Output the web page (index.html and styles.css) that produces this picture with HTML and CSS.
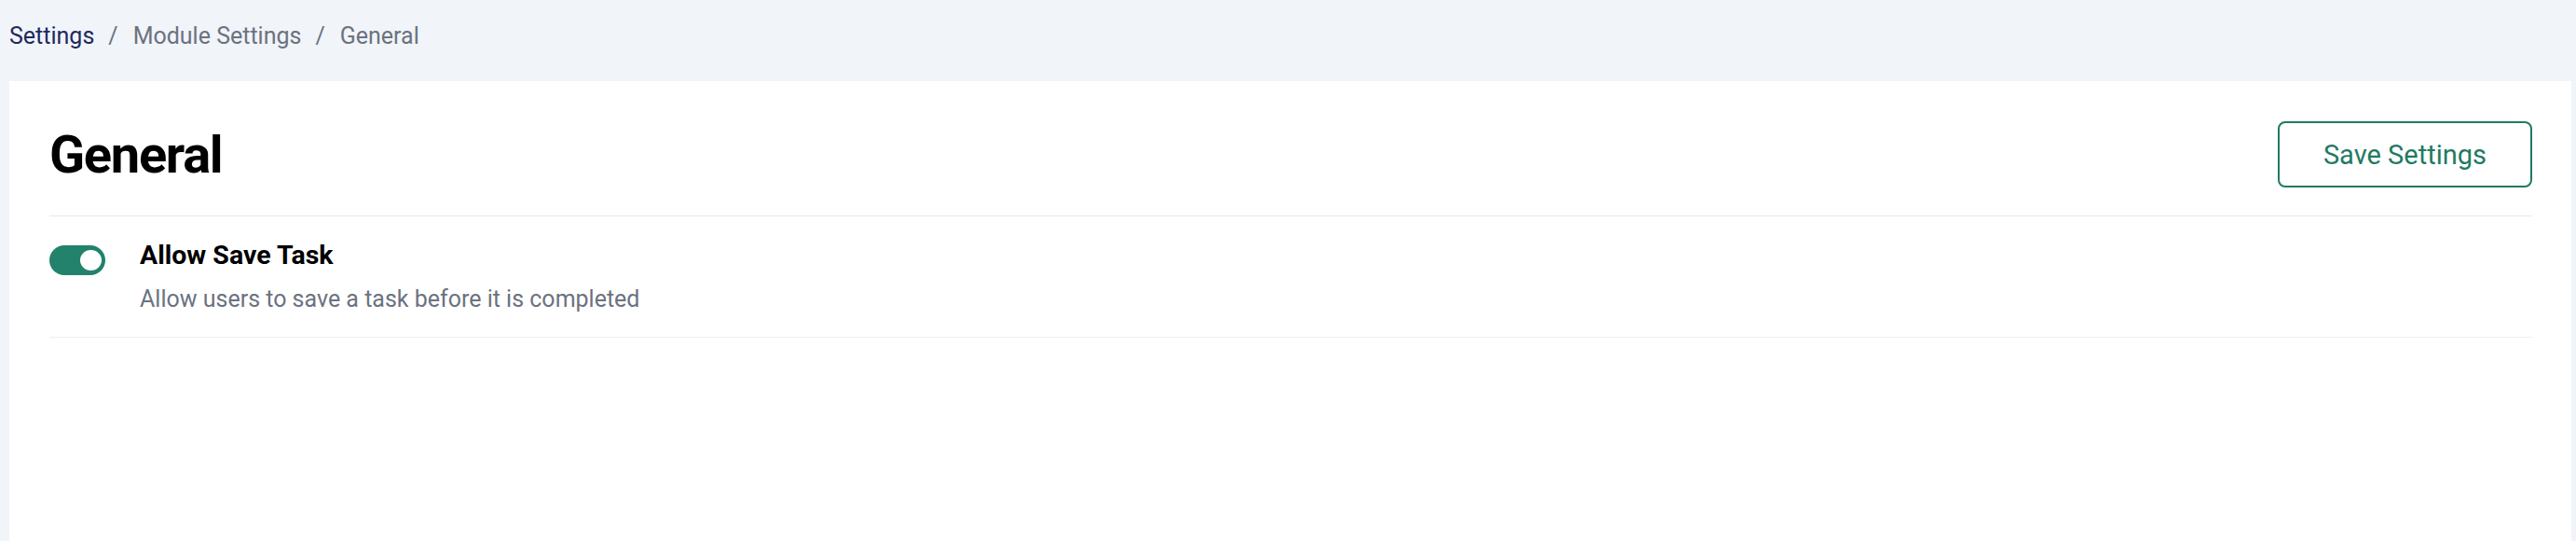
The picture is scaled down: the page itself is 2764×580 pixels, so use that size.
FILE: index.html
```html
<!DOCTYPE html>
<html lang="en">
<head>
    <meta charset="UTF-8">
    <meta name="viewport" content="width=device-width, initial-scale=1.0">
    <title>General - Module Settings</title>
    <link rel="stylesheet" href="styles.css">
</head>
<body>
    <nav class="breadcrumb">
        <a href="#" class="crumb-link">Settings</a>
        <span class="crumb-sep">/</span>
        <span class="crumb">Module Settings</span>
        <span class="crumb-sep">/</span>
        <span class="crumb">General</span>
    </nav>
    <div class="card">
        <div class="card-header">
            <h1>General</h1>
            <button class="save-btn">Save Settings</button>
        </div>
        <div class="setting-row">
            <label class="toggle">
                <input type="checkbox" checked>
                <span class="track"><span class="knob"></span></span>
            </label>
            <div class="setting-text">
                <div class="setting-title">Allow Save Task</div>
                <div class="setting-desc">Allow users to save a task before it is completed</div>
            </div>
        </div>
    </div>
</body>
</html>
```

FILE: styles.css
```css
body {
    margin: 0;
    padding: 0 5px 0 10px;
    background-color: #f1f4f9;
    font-family: Roboto, "Liberation Sans", sans-serif;
    color: #000;
}
.breadcrumb {
    display: flex;
    align-items: center;
    padding: 21px 0 30px;
    font-size: 25px;
    line-height: 36px;
    color: #6b7280;
}
.crumb-link {
    color: #1e2a5e;
    text-decoration: none;
}
.crumb-sep {
    margin: 0 16px 0 15px;
}
.card {
    background-color: #fff;
    padding: 43px 42px 43px 43px;
    min-height: 407px;
}
.card-header {
    display: flex;
    justify-content: space-between;
    align-items: center;
    padding-bottom: 30px;
    border-bottom: 1px solid #e7e8ec;
}
h1 {
    margin: 0;
    font-size: 56px;
    font-weight: 700;
    letter-spacing: -1.3px;
}
.save-btn {
    height: 71px;
    padding: 0 47px;
    background-color: #fff;
    color: #1f7a63;
    border: 2px solid #1f7a63;
    border-radius: 8px;
    font-family: inherit;
    font-size: 29px;
    cursor: pointer;
}
.setting-row {
    display: flex;
    align-items: flex-start;
    gap: 37px;
    padding: 26px 0 22px;
    border-bottom: 1px solid #f0f1f3;
}
.toggle {
    margin-top: 5px;
    cursor: pointer;
}
.toggle input {
    display: none;
}
.track {
    display: flex;
    justify-content: flex-end;
    align-items: center;
    width: 60px;
    height: 32px;
    padding: 0 2px;
    box-sizing: border-box;
    border-radius: 16px;
    background-color: #23826b;
}
.knob {
    width: 27px;
    height: 26px;
    border-radius: 50%;
    background-color: #fff;
    border: 2px solid #23826b;
    box-sizing: border-box;
}
.setting-title {
    font-size: 28.5px;
    font-weight: 700;
    line-height: 32px;
}
.setting-desc {
    margin-top: 13px;
    font-size: 25px;
    line-height: 36px;
    color: #6b7280;
}
```
